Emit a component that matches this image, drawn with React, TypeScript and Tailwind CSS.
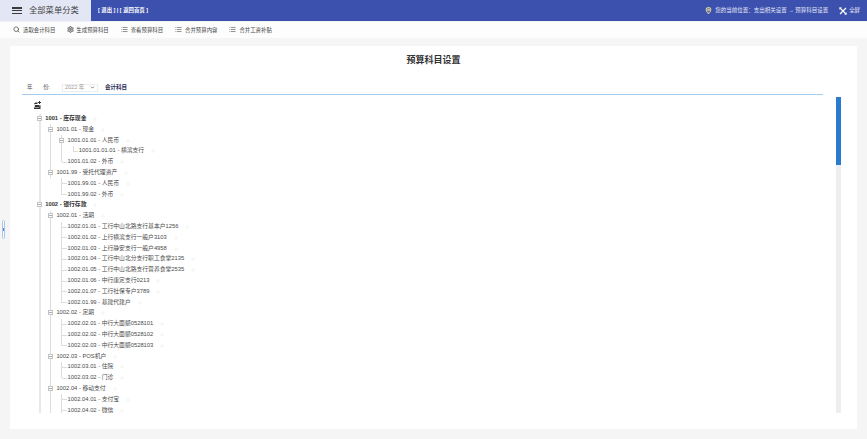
import React from 'react';
import { ChevronDown, List, MapPin, Plus, Search, Settings } from 'lucide-react';

interface TreeNode {
  label: string;
  bold?: boolean;
  // children carry on past the bottom of the scroll area
  more?: boolean;
  children?: TreeNode[];
}

type GuideKind = 'blank' | 'pipe' | 'tee' | 'elbow' | 'open';

interface FlatRow {
  node: TreeNode;
  guides: GuideKind[];
}

const leaves = (items: string[]): TreeNode[] => items.map((label) => ({ label }));

const tree: TreeNode[] = [
  {
    label: '1001 - 库存现金',
    bold: true,
    children: [
      {
        label: '1001.01 - 现金',
        children: [
          {
            label: '1001.01.01 - 人民币',
            children: leaves(['1001.01.01.01 - 横滨支行']),
          },
          { label: '1001.01.02 - 外币' },
        ],
      },
      {
        label: '1001.99 - 受托代理资产',
        children: leaves(['1001.99.01 - 人民币', '1001.99.02 - 外币']),
      },
    ],
  },
  {
    label: '1002 - 银行存款',
    bold: true,
    more: true,
    children: [
      {
        label: '1002.01 - 活期',
        children: leaves([
          '1002.01.01 - 工行中山北路支行基本户1256',
          '1002.01.02 - 上行横滨支行一般户3103',
          '1002.01.03 - 上行静安支行一般户4958',
          '1002.01.04 - 工行中山北分支行职工食堂2135',
          '1002.01.05 - 工行中山北路支行营养食堂2535',
          '1002.01.06 - 中行康定支行0213',
          '1002.01.07 - 工行社保专户3789',
          '1002.01.99 - 基建代建户',
        ]),
      },
      {
        label: '1002.02 - 定期',
        children: leaves([
          '1002.02.01 - 中行大面额0528101',
          '1002.02.02 - 中行大面额0528102',
          '1002.02.03 - 中行大面额0528103',
        ]),
      },
      {
        label: '1002.03 - POS机户',
        children: leaves(['1002.03.01 - 住院', '1002.03.02 - 门诊']),
      },
      {
        label: '1002.04 - 移动支付',
        more: true,
        children: leaves(['1002.04.01 - 支付宝', '1002.04.02 - 微信']),
      },
    ],
  },
];

// Flatten the tree so every row can draw its own guide cells in flow
const flatten = (nodes: TreeNode[], prefix: GuideKind[], open: boolean): FlatRow[] =>
  nodes.flatMap((node, index) => {
    const last = index === nodes.length - 1 && !open;
    const own: GuideKind = node.children ? 'open' : last ? 'elbow' : 'tee';
    const next: GuideKind = last ? 'blank' : 'pipe';
    return [
      { node, guides: [...prefix, own] },
      ...(node.children ? flatten(node.children, [...prefix, next], !!node.more) : []),
    ];
  });

const rows = flatten(tree, [], true);

const GuideCell: React.FC<{ kind: GuideKind; depth: number }> = ({ kind, depth }) => {
  const lineColor = depth === 0 ? 'w-[2px] bg-[#e8e8e8]' : 'w-px bg-[#dddddd]';

  return (
    <div className="relative flex h-full w-[11.2px] shrink-0 justify-center">
      {kind === 'pipe' && <div className={`h-full ${lineColor}`} />}
      {kind === 'tee' && (
        <>
          <div className={`h-full ${lineColor}`} />
          <div className="absolute left-[5.6px] top-[5px] h-px w-[5px] bg-[#dddddd]" />
        </>
      )}
      {kind === 'elbow' && (
        <>
          <div className={`h-[5.5px] ${lineColor}`} />
          <div className="absolute left-[5.6px] top-[5px] h-px w-[5px] bg-[#dddddd]" />
        </>
      )}
      {kind === 'open' && (
        <>
          <div className={`h-full ${lineColor}`} />
          <div className="absolute left-[3px] top-[2.5px] flex h-[5px] w-[5px] items-center justify-center border border-[#c4c4c4] bg-white">
            <div className="h-px w-[3px] bg-[#aaaaaa]" />
          </div>
        </>
      )}
    </div>
  );
};

const TreeRow: React.FC<{ row: FlatRow }> = ({ row }) => (
  <div className="flex h-[10.8px] items-center">
    {row.guides.map((kind, depth) => (
      <GuideCell key={depth} kind={kind} depth={depth} />
    ))}
    <span
      className={`whitespace-nowrap text-[5.8px] leading-none ${
        row.node.bold ? 'font-bold text-[#333333]' : 'text-[#4a4a4a]'
      }`}
    >
      {row.node.label}
    </span>
    <Plus className="ml-[6px] h-[6px] w-[6px] text-[#eef3ee]" strokeWidth={3} />
  </div>
);

const toolbarItems = [
  { label: '选取会计科目', icon: 'search' },
  { label: '生成预算科目', icon: 'gear' },
  { label: '查看预算科目', icon: 'list' },
  { label: '合并预算内容', icon: 'list' },
  { label: '合并工资补贴', icon: 'list' },
];

const ToolbarIcon: React.FC<{ icon: string }> = ({ icon }) => {
  if (icon === 'search') return <Search className="mr-[3px] h-[7px] w-[7px] text-[#666666]" strokeWidth={3} />;
  if (icon === 'gear') return <Settings className="mr-[2px] h-[7px] w-[7px] text-[#777777]" strokeWidth={3.5} />;
  return <List className="mr-[3px] h-[7px] w-[7px] text-[#666666]" strokeWidth={2.5} />;
};

const App: React.FC = () => {
  return (
    <div
      className="flex h-[439px] w-[867px] flex-col overflow-hidden bg-[#f5f5f5] text-[#444444]"
      style={{ fontFamily: '"Liberation Sans", "Noto Sans CJK SC", sans-serif' }}
    >
      {/* Top bar */}
      <header className="flex h-[21px] shrink-0">
        <div className="flex w-[91px] items-center bg-[#e3e7f5] pl-[12px]">
          <div className="flex h-[7px] w-[10px] flex-col justify-between">
            <div className="h-[1.5px] bg-[#3a3a3a]" />
            <div className="h-[1.5px] bg-[#3a3a3a]" />
            <div className="h-[1.5px] bg-[#3a3a3a]" />
          </div>
          <span className="ml-[7px] text-[8.3px] text-[#444444]">全部菜单分类</span>
        </div>
        <div className="flex flex-1 items-center bg-[#3c50ae] pl-[7px] pr-[7px] text-white">
          <span className="text-[5.4px] font-bold">[ 退出 ] | [ 返回首页 ]</span>
          <MapPin className="ml-auto h-[7px] w-[7px] text-[#d8cf96]" strokeWidth={3.5} />
          <span className="ml-[3px] text-[5.5px] text-[#e6e9f7]">您的当前位置：支出相关设置 → 预算科目设置</span>
          <svg className="ml-[11px] h-[8px] w-[8px]" viewBox="0 0 8 8" fill="none" stroke="#ffffff">
            <path d="M1 1l6 6M7 1L1 7" strokeWidth="1.2" />
            <path d="M0.5 2.5V.5h2M7.5 5.5v2h-2" strokeWidth="0.6" />
          </svg>
          <span className="ml-[2px] text-[5.4px]">全屏</span>
        </div>
      </header>

      {/* Toolbar */}
      <nav className="flex h-[17px] shrink-0 items-center gap-[12px] border-t border-[#f0f1f8] bg-[#fdfdfd] pl-[13px]">
        {toolbarItems.map((item) => (
          <div key={item.label} className="flex items-center">
            <ToolbarIcon icon={item.icon} />
            <span className="text-[5.4px] text-[#444444]">{item.label}</span>
          </div>
        ))}
      </nav>

      {/* Panel */}
      <main className="mx-[10px] mb-[10px] mt-[8px] flex min-h-0 flex-1 flex-col bg-white">
        <div className="flex h-[36px] shrink-0 items-center justify-center pb-[6px]">
          <h1 className="text-[9px] font-bold text-[#333333]">预算科目设置</h1>
        </div>

        <div className="ml-[12px] mr-[34px] flex h-[13px] shrink-0 items-center border-b border-[#a3cdf0] pb-px pl-[5px]">
          <span className="w-[35px] whitespace-pre text-[5.5px] text-[#555555]">年       份:</span>
          <div className="flex h-[8px] w-[36px] items-center justify-between border border-[#eeeeee] pl-[2px] pr-[2px] text-[5.5px] text-[#999999]">
            <span>2022 年</span>
            <ChevronDown className="h-[5px] w-[5px] text-[#555555]" strokeWidth={3.5} />
          </div>
          <span className="ml-[7px] text-[5.5px] font-bold text-[#2a2a55]">会计科目</span>
        </div>

        <div className="mb-[16px] ml-[24px] mr-[16px] mt-[2px] flex min-h-0 flex-1">
          <div className="min-w-0 flex-1 overflow-hidden">
            <div className="h-[16.6px] pt-[4px]">
              <svg className="-ml-[1px] h-[8px] w-[8px]" viewBox="0 0 8 8" fill="#333333">
                <path d="M0 2.5h1.5L2.2 1.5h2.3v1.6H1.2v3.4h5V4.2h1.3V8H0z" />
                <path d="M2 4h4v2H2z" />
                <path d="M6 0h1v1h1v1H7v1H6V2H5V1h1z" />
              </svg>
            </div>
            {rows.map((row) => (
              <TreeRow key={row.node.label} row={row} />
            ))}
          </div>
          {/* Scrollbar */}
          <div className="w-[5px] shrink-0 bg-[#eeeeee]">
            <div className="h-[68px] bg-[#2a7bd0]" />
          </div>
        </div>
      </main>

      {/* Collapse handle on the left edge */}
      <div className="absolute left-[2px] top-[220px] flex h-[19px] w-[3px] items-center justify-center rounded-[2px] border border-[#a9c4ea] bg-white">
        <div className="h-[3px] w-px bg-[#5c88cc]" />
      </div>
    </div>
  );
};

export default App;
